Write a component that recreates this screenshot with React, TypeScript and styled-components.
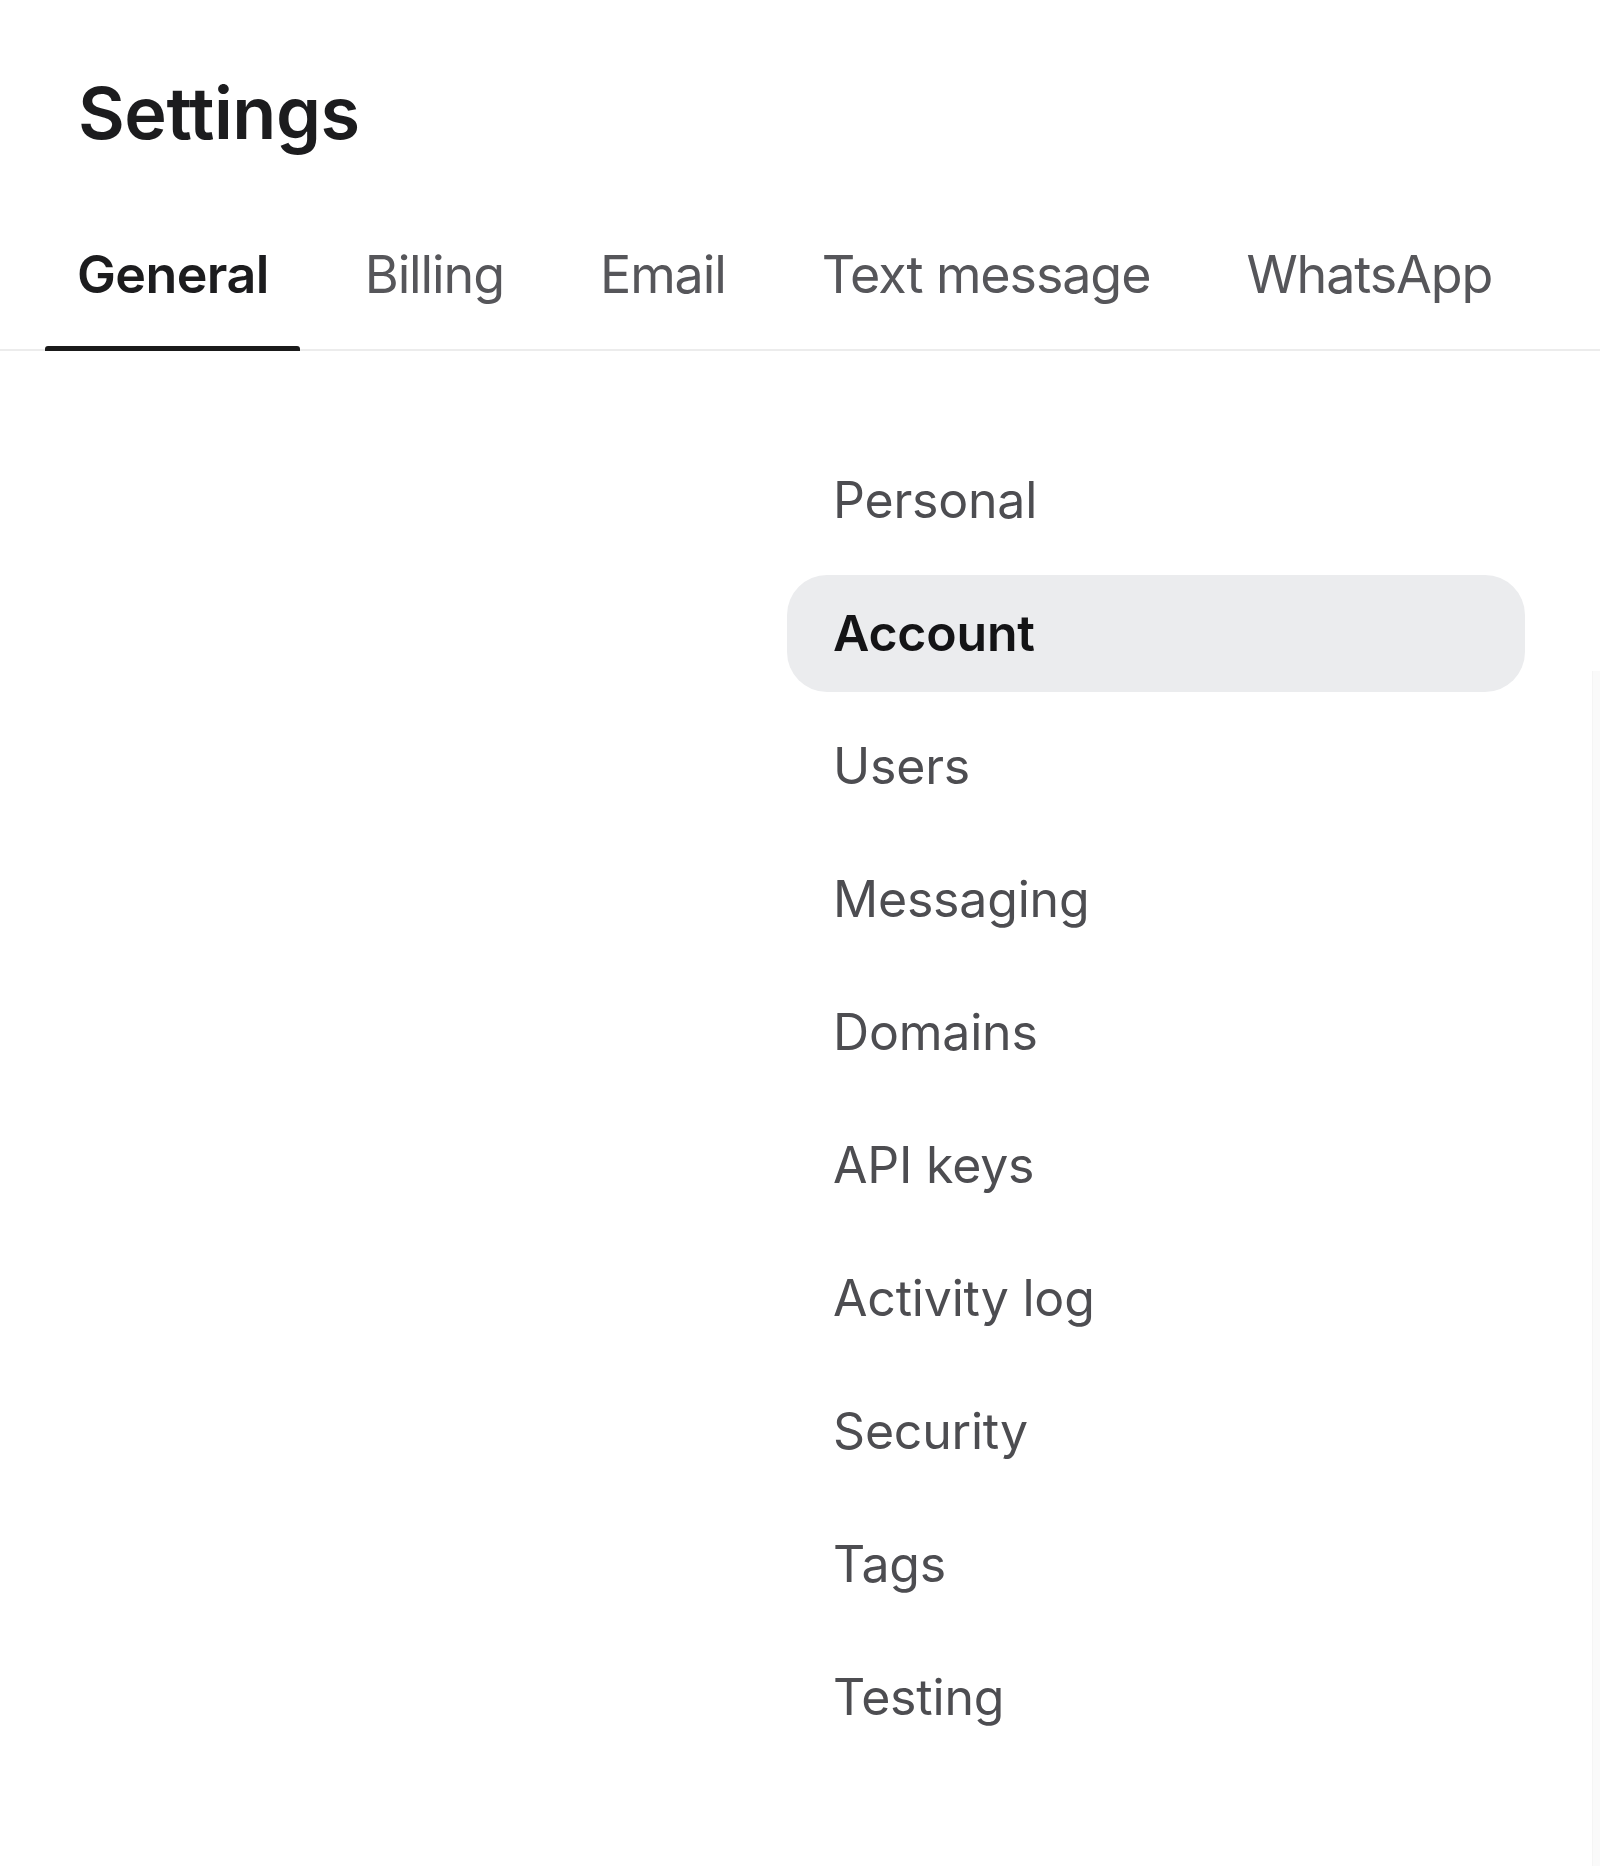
import styled, { createGlobalStyle } from 'styled-components'

const GlobalStyle = createGlobalStyle`
  html, body {
    margin: 0;
    padding: 0;
    background: #ffffff;
  }

  body {
    font-family: Inter, 'Noto Sans', 'Liberation Sans', sans-serif;
    color: #1c1c1e;
    -webkit-font-smoothing: antialiased;
  }
`

const Page = styled.div`
  display: flex;
  flex-direction: column;
  min-height: 100vh;
`

const Header = styled.header`
  padding: 77px 0 0 78px;
`

const Title = styled.h1`
  margin: 0;
  font-size: 72px;
  line-height: 72px;
  font-weight: 600;
  letter-spacing: -0.5px;
  color: #1c1c1e;
`

const TabBar = styled.nav`
  display: flex;
  gap: 33px;
  margin-top: 100px;
  padding-left: 45px;
  border-bottom: 2px solid #ececec;
`

const Tab = styled.button<{ active?: boolean }>`
  position: relative;
  margin: 0 0 -2px;
  padding: 0 31px 50px 32px;
  border: none;
  background: none;
  font-family: inherit;
  font-size: 52px;
  line-height: 52px;
  font-weight: ${({ active }) => (active ? 600 : 400)};
  letter-spacing: ${({ active }) => (active ? '-0.6px' : '-1.1px')};
  color: ${({ active }) => (active ? '#1c1c1e' : '#56565a')};
  cursor: pointer;

  &::after {
    content: '';
    position: absolute;
    left: 0;
    right: 0;
    bottom: 0;
    height: 5px;
    border-radius: 3px 3px 0 0;
    background: ${({ active }) => (active ? '#1a1a1a' : 'transparent')};
  }
`

const Main = styled.main`
  flex: 1;
  display: grid;
  grid-template-columns: 787px 738px 1fr 8px;
`

const Content = styled.section``

const SideMenu = styled.ul`
  display: flex;
  flex-direction: column;
  gap: 16px;
  margin: 91px 0 0;
  padding: 0;
  list-style: none;
`

const MenuItem = styled.li<{ active?: boolean }>`
  display: flex;
  align-items: center;
  height: 117px;
  padding-left: 46px;
  border-radius: 40px;
  font-size: 50px;
  line-height: 117px;
  font-weight: ${({ active }) => (active ? 600 : 400)};
  letter-spacing: -0.2px;
  color: ${({ active }) => (active ? '#141416' : '#4d4d51')};
  background: ${({ active }) => (active ? '#ebecee' : 'transparent')};
  cursor: pointer;
`

const ScrollTrack = styled.div`
  margin-top: 320px;
  background: #fafafa;
  border-left: 1px solid #f5f5f5;
`

const tabs = ['General', 'Billing', 'Email', 'Text message', 'WhatsApp']

const menu = [
  'Personal',
  'Account',
  'Users',
  'Messaging',
  'Domains',
  'API keys',
  'Activity log',
  'Security',
  'Tags',
  'Testing',
]

function App() {
  return (
    <Page>
      <GlobalStyle />
      <Header>
        <Title>Settings</Title>
      </Header>
      <TabBar>
        {tabs.map((tab) => (
          <Tab key={tab} active={tab === 'General'}>
            {tab}
          </Tab>
        ))}
      </TabBar>
      <Main>
        <Content />
        <SideMenu>
          {menu.map((item) => (
            <MenuItem key={item} active={item === 'Account'}>
              {item}
            </MenuItem>
          ))}
        </SideMenu>
        <div />
        <ScrollTrack />
      </Main>
    </Page>
  )
}

export default App
